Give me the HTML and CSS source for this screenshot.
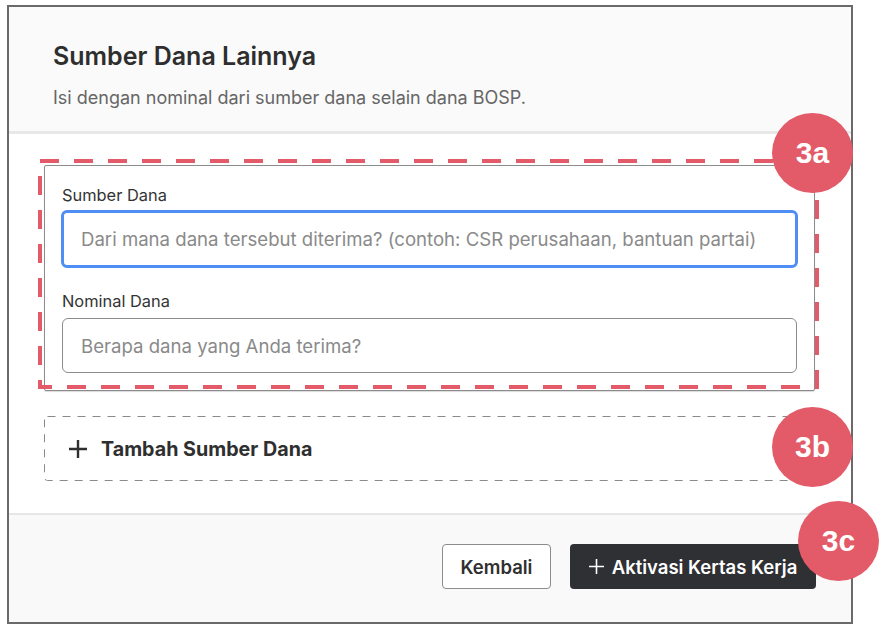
FILE: index.html
```html
<!DOCTYPE html>
<html lang="id">
<head>
<meta charset="utf-8">
<title>Sumber Dana Lainnya</title>
<link rel="stylesheet" href="styles.css">
</head>
<body>
<div class="frame">
  <header class="head">
    <h1 class="title">Sumber Dana Lainnya</h1>
    <p class="sub">Isi dengan nominal dari sumber dana selain dana BOSP.</p>
  </header>
  <main class="content">
    <section class="card">
      <svg class="hl" width="783" height="232" viewBox="0 0 783 232"><rect x="2" y="2" width="777" height="226" fill="none" stroke="#e35b69" stroke-width="4" stroke-dasharray="19 15"/></svg>
      <label class="lbl">Sumber Dana</label>
      <div class="inp focus">Dari mana dana tersebut diterima? (contoh: CSR perusahaan, bantuan partai)</div>
      <label class="lbl lbl2">Nominal Dana</label>
      <div class="inp">Berapa dana yang Anda terima?</div>
    </section>
    <div class="add">
      <svg class="addborder" width="771" height="65" viewBox="0 0 771 65"><rect x="0.5" y="0.5" width="770" height="64" rx="3" fill="none" stroke="#8a8a8a" stroke-width="1" stroke-dasharray="8 7"/></svg>
      <svg class="plus" width="20" height="20" viewBox="0 0 20 20"><path d="M10 1v18M1 10h18" stroke="#2f2f2f" stroke-width="2.4"/></svg>
      <span>Tambah Sumber Dana</span>
    </div>
  </main>
  <footer class="foot">
    <button class="btn ghost">Kembali</button>
    <button class="btn dark"><svg width="15" height="15" viewBox="0 0 15 15"><path d="M7.5 0v15M0 7.5h15" stroke="#fff" stroke-width="1.6"/></svg>Aktivasi Kertas Kerja</button>
  </footer>
  <div class="badge b3a">3a</div>
  <div class="badge b3b">3b</div>
  <div class="badge b3c">3c</div>
</div>
</body>
</html>
```
FILE: styles.css
```css
* { box-sizing: border-box; }
body { margin: 0; background: #fff; font-family: Inter, "Noto Sans", sans-serif; color: #333; }
.frame {
  position: relative;
  margin: 5px 0 0 7px;
  width: 846px;
  height: 619px;
  border: 2px solid #6a6a6a;
  display: flex;
  flex-direction: column;
  background: #fff;
}
.head {
  height: 127px;
  background: #fafafa;
  border-bottom: 3px solid #e8e8e8;
  padding: 34px 0 0 44px;
}
.title { margin: 0; font-size: 25px; line-height: 30px; font-weight: 600; color: #2e2e2e; }
.sub { margin: 15px 0 0; font-size: 18px; line-height: 24px; color: #666; }
.content {
  height: 379px;
  padding: 31px 36px 0 35px;
}
.card {
  position: relative;
  border: 1px solid #8c8c8c;
  border-radius: 2px;
  padding: 19px 17px 17px 17px;
  box-shadow: 0 1px 1px rgba(0,0,0,0.15);
}
.hl { position: absolute; left: -7px; top: -7px; }
.lbl { display: block; font-size: 16.4px; line-height: 20px; color: #333; margin-bottom: 5px; }
.lbl2 { margin-top: 23px; margin-bottom: 7px; }
.inp {
  height: 55px;
  border: 1px solid #8c8c8c;
  border-radius: 6px;
  padding: 0 18px;
  display: flex;
  align-items: center;
  font-size: 18.6px;
  color: #8a8a8a;
  white-space: nowrap;
}
.inp.focus { border: 3px solid #4f8ef5; height: 58px; margin: 0 -1px; padding: 0 17px; }
.add {
  position: relative;
  margin-top: 25px;
  height: 65px;
  display: flex;
  align-items: center;
  padding-left: 24px;
  gap: 13px;
  font-size: 19.7px;
  font-weight: 700;
  color: #2f2f2f;
}
.addborder { position: absolute; left: 0; top: 0; }
.foot {
  flex: 1;
  background: #f9f9f9;
  border-top: 2px solid #e6e6e6;
  display: flex;
  justify-content: flex-end;
  align-items: flex-start;
  gap: 19px;
  padding: 29px 35px 0 0;
}
.btn {
  height: 45px;
  border-radius: 4px;
  font-family: Inter, "Noto Sans", sans-serif;
  font-size: 18.5px;
  font-weight: 600;
  display: flex;
  align-items: center;
  justify-content: center;
  gap: 8px;
}
.ghost { width: 109px; background: #fff; border: 1px solid #8c8c8c; color: #2f2f2f; }
.dark { width: 246px; background: #2f3033; border: none; color: #fff; }
.badge {
  position: absolute;
  width: 81px;
  height: 80px;
  border-radius: 50%;
  background: #e35b69;
  color: #fff;
  font-family: "Liberation Sans", Arial, sans-serif;
  font-weight: 700;
  font-size: 30px;
  display: flex;
  align-items: center;
  justify-content: center;
}
.b3a { left: 763px; top: 106px; }
.b3b { left: 763px; top: 400px; }
.b3c { left: 789px; top: 494px; }
```
